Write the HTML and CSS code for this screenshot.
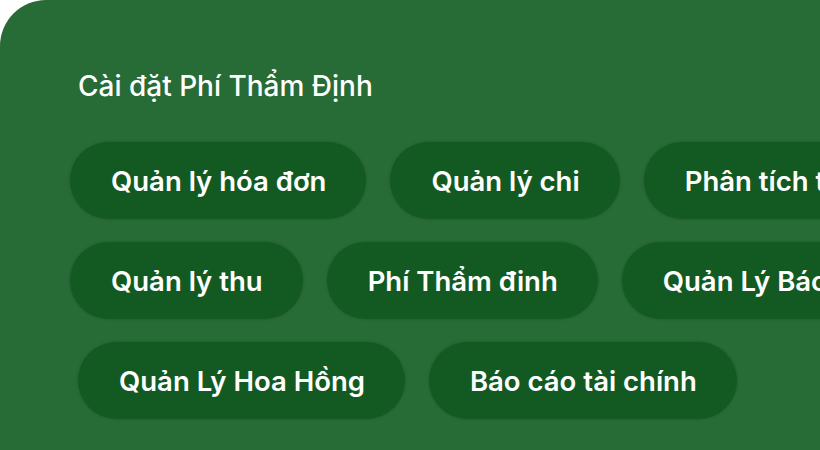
FILE: index.html
```html
<!DOCTYPE html>
<html lang="vi">
<head>
<meta charset="utf-8">
<link rel="stylesheet" href="styles.css">
</head>
<body>
<main class="panel">
  <h1 class="title">Cài đặt Phí Thẩm Định</h1>
  <div class="rows">
    <div class="row">
      <span class="pill">Quản lý hóa đơn</span>
      <span class="pill">Quản lý chi</span>
      <span class="pill">Phân tích tài chính</span>
    </div>
    <div class="row">
      <span class="pill">Quản lý thu</span>
      <span class="pill">Phí Thẩm đinh</span>
      <span class="pill">Quản Lý Báo cáo</span>
    </div>
    <div class="row row-shift">
      <span class="pill">Quản Lý Hoa Hồng</span>
      <span class="pill">Báo cáo tài chính</span>
    </div>
  </div>
</main>
</body>
</html>
```

FILE: styles.css
```css
html, body {
  margin: 0;
  padding: 0;
  background: #ffffff;
  width: 820px;
  height: 450px;
  overflow: hidden;
}

.panel {
  box-sizing: border-box;
  width: 820px;
  height: 450px;
  background: #276b37;
  border-top-left-radius: 46px;
  padding: 68px 0 0 70px;
  overflow: hidden;
  font-family: Inter, "Noto Sans", sans-serif;
  color: #ffffff;
}

.title {
  margin: 0 0 38px 8px;
  font-size: 28px;
  font-weight: 500;
  line-height: 36px;
}

.rows {
  display: flex;
  flex-direction: column;
  gap: 23px;
}

.row {
  display: flex;
  gap: 24px;
  flex-wrap: nowrap;
}

.row-shift {
  padding-left: 8px;
}

.pill {
  flex: none;
  display: flex;
  align-items: center;
  height: 77px;
  padding: 0 40px 0 41px;
  border-radius: 39px;
  background: #135a22;
  box-shadow: 0 0 3px rgba(0, 0, 0, 0.18);
  font-size: 27.5px;
  font-weight: 600;
  white-space: nowrap;
}
```
